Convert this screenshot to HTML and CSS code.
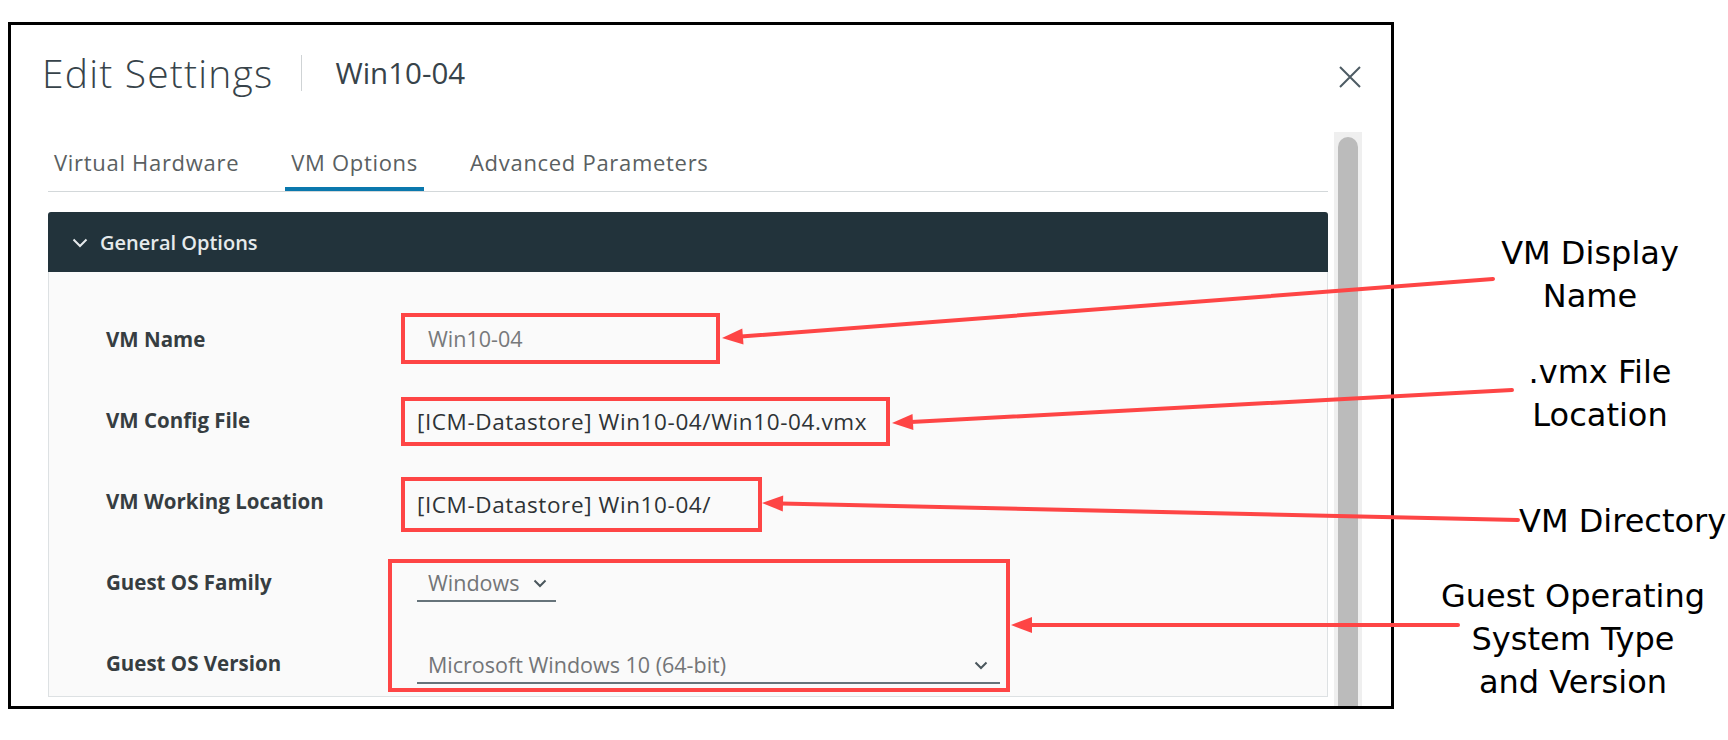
FILE: index.html
```html
<!DOCTYPE html>
<html lang="en">
<head>
<meta charset="utf-8">
<title>Edit Settings | Win10-04</title>
<link rel="stylesheet" href="styles.css">
</head>
<body>
<div class="page">
  <section class="dialog">
    <header class="dlg-head">
      <h1 class="dlg-title">Edit Settings</h1>
      <span class="dlg-sep"></span>
      <span class="dlg-sub">Win10-04</span>
      <button class="dlg-close" aria-label="Close">
        <svg width="22" height="22" viewBox="0 0 22 22"><path d="M1 1 L21 21 M21 1 L1 21" stroke="#4d5b63" stroke-width="2" fill="none"/></svg>
      </button>
    </header>
    <div class="dlg-body">
      <div class="dlg-main">
        <nav class="tabs">
          <span class="tab">Virtual Hardware</span>
          <span class="tab tab-active">VM Options</span>
          <span class="tab">Advanced Parameters</span>
        </nav>
        <div class="panel">
          <div class="panel-head">
            <svg class="panel-chev" width="16" height="10" viewBox="0 0 16 10"><path d="M1.5 1.5 L8 8 L14.5 1.5" stroke="#e6eaec" stroke-width="2" fill="none"/></svg>
            <span>General Options</span>
          </div>
          <div class="panel-body">
            <div class="form">
              <div class="label">VM Name</div>
              <div class="mark mark-name"><span class="val-input">Win10-04</span></div>

              <div class="label">VM Config File</div>
              <div class="mark mark-config"><span class="val-text">[ICM-Datastore] Win10-04/Win10-04.vmx</span></div>

              <div class="label">VM Working Location</div>
              <div class="mark mark-work"><span class="val-text">[ICM-Datastore] Win10-04/</span></div>

              <div class="label">Guest OS Family</div>
              <div class="mark mark-guest">
                <div class="select select-family">
                  <span>Windows</span>
                  <svg width="14" height="9" viewBox="0 0 14 9"><path d="M1.5 1.5 L7 7 L12.5 1.5" stroke="#4a565c" stroke-width="2" fill="none"/></svg>
                </div>
                <div class="select select-version">
                  <span>Microsoft Windows 10 (64-bit)</span>
                  <svg width="14" height="9" viewBox="0 0 14 9"><path d="M1.5 1.5 L7 7 L12.5 1.5" stroke="#4a565c" stroke-width="2" fill="none"/></svg>
                </div>
              </div>

              <div class="label">Guest OS Version</div>
            </div>
          </div>
        </div>
      </div>
      <div class="scrollbar"><div class="thumb"></div></div>
    </div>
  </section>

  <aside class="notes">
    <p class="note note-name">VM Display<br>Name</p>
    <p class="note note-vmx">.vmx File<br>Location</p>
    <p class="note note-dir">VM Directory</p>
    <p class="note note-os">Guest Operating<br>System Type<br>and Version</p>
  </aside>

  <svg class="arrows" width="1728" height="740" viewBox="0 0 1728 740">
    <g stroke="#fe4545" stroke-width="4" stroke-linecap="round" fill="none">
      <line x1="1493" y1="279" x2="741" y2="336.6"/>
      <line x1="1512" y1="390" x2="911" y2="422"/>
      <line x1="1518" y1="520" x2="781" y2="503.4"/>
      <line x1="1458" y1="625" x2="1030" y2="625"/>
    </g>
    <g fill="#fe4545">
      <polygon points="722,338 742.3,328.5 743.5,344.5"/>
      <polygon points="892,423 912.5,414 913.4,430"/>
      <polygon points="762,503 783.2,495.4 782.8,511.4"/>
      <polygon points="1011,625 1032,617 1032,633"/>
    </g>
  </svg>
</div>
</body>
</html>
```

FILE: styles.css
```css
html, body {
  margin: 0;
  padding: 0;
  background: #ffffff;
  overflow: hidden;
}

.page {
  position: relative;
  display: flex;
  width: 1728px;
  height: 740px;
  font-family: "Open Sans", "Noto Sans", sans-serif;
}

/* ---------- dialog ---------- */
.dialog {
  box-sizing: border-box;
  flex: none;
  width: 1386px;
  height: 687px;
  margin: 22px 0 0 8px;
  border: 3px solid #000;
  background: #fff;
  overflow: hidden;
  display: flex;
  flex-direction: column;
}

.dlg-head {
  flex: none;
  display: flex;
  align-items: center;
  height: 96px;
  padding: 0 30px 0 31px;
}

.dlg-title {
  margin: 0;
  font-size: 39px;
  font-weight: 300;
  line-height: 48px;
  letter-spacing: 1.2px;
  color: #37434a;
}

.dlg-sep {
  width: 1px;
  height: 36px;
  background: #cfd3d5;
  margin: 0 33px 0 28px;
}

.dlg-sub {
  font-size: 29.5px;
  font-weight: 400;
  line-height: 40px;
  color: #37434a;
}

.dlg-close {
  margin-left: auto;
  margin-top: 7px;
  padding: 0;
  border: 0;
  background: none;
  width: 22px;
  height: 22px;
  display: flex;
}

.dlg-body {
  flex: 1;
  min-height: 0;
  display: flex;
  gap: 6px;
  margin-top: 11px;
  padding-left: 37px;
}

.dlg-main {
  width: 1280px;
  flex: none;
  display: flex;
  flex-direction: column;
}

/* ---------- tabs ---------- */
.tabs {
  display: flex;
  gap: 40px;
  padding-top: 15px;
  border-bottom: 1px solid #d3d8da;
}

.tab {
  padding: 0 6px 10px;
  border-bottom: 4px solid transparent;
  font-size: 22px;
  line-height: 30px;
  color: #5a5f62;
  letter-spacing: 0.7px;
}

.tab-active {
  border-bottom-color: #0a78ad;
}

/* ---------- panel ---------- */
.panel {
  margin-top: 20px;
  display: flex;
  flex-direction: column;
}

.panel-head {
  height: 60px;
  display: flex;
  align-items: center;
  gap: 12px;
  padding-left: 24px;
  background: #22333b;
  border-radius: 3px 3px 0 0;
  color: #e6eaec;
  font-size: 20px;
  font-weight: 600;
}

.panel-chev {
  margin-top: 2px;
}

.panel-body {
  box-sizing: border-box;
  height: 425px;
  overflow: hidden;
  background: #fafafa;
  border: 1px solid #dde1e3;
  border-top: 0;
  padding: 26px 0 0 57px;
}

.form {
  display: grid;
  grid-template-columns: 295px 1fr;
  grid-auto-rows: 81px;
  align-items: center;
}

.label {
  font-size: 20.5px;
  font-weight: 700;
  color: #363d41;
}

.mark {
  box-sizing: border-box;
  border: 4px solid #fe4545;
  display: flex;
  align-items: center;
}

.mark-name {
  width: 319px;
  height: 51px;
  padding-left: 23px;
}

.mark-config {
  width: 489px;
  height: 49px;
  padding-left: 12px;
  margin-top: 4px;
}

.mark-work {
  width: 361px;
  height: 55px;
  padding-left: 12px;
  margin-top: 8px;
}

.mark-guest {
  grid-column: 2;
  grid-row: 4 / span 2;
  align-self: start;
  display: block;
  width: 622px;
  height: 133px;
  margin: 18px 0 0 -13px;
  padding: 5px 0 0 25px;
}

.val-input {
  font-size: 21.5px;
  color: #77797b;
}

.val-text {
  font-size: 22.5px;
  letter-spacing: 0.6px;
  color: #2e3336;
}

.select {
  box-sizing: border-box;
  display: flex;
  align-items: center;
  justify-content: space-between;
  padding: 0 9px 2px 11px;
  border-bottom: 2px solid #66737a;
  font-size: 21.5px;
  line-height: 30px;
  color: #737577;
}

.select-family {
  width: 139px;
}

.select-version {
  width: 583px;
  margin-top: 48px;
  padding-right: 12px;
}

/* ---------- scrollbar ---------- */
.scrollbar {
  box-sizing: border-box;
  width: 28px;
  flex: none;
  background: #efefef;
  padding: 5px 4px 0;
}

.thumb {
  height: 100%;
  background: #bbbbbb;
  border-radius: 10px 10px 0 0;
}

/* ---------- annotations ---------- */
.notes {
  flex: 1;
  display: flex;
  flex-direction: column;
  padding-top: 232px;
  font-family: "DejaVu Sans", sans-serif;
  font-size: 32px;
  line-height: 43px;
  color: #000;
}

.note {
  margin: 0;
  width: 300px;
  text-align: center;
}

.note-name { margin-left: 46px; }
.note-vmx { margin-left: 56px; margin-top: 33px; }
.note-dir { margin-left: 125px; margin-top: 63px; text-align: left; width: auto; }
.note-os { margin-left: 29px; margin-top: 32px; }

.arrows {
  position: absolute;
  left: 0;
  top: 0;
  pointer-events: none;
}
```
